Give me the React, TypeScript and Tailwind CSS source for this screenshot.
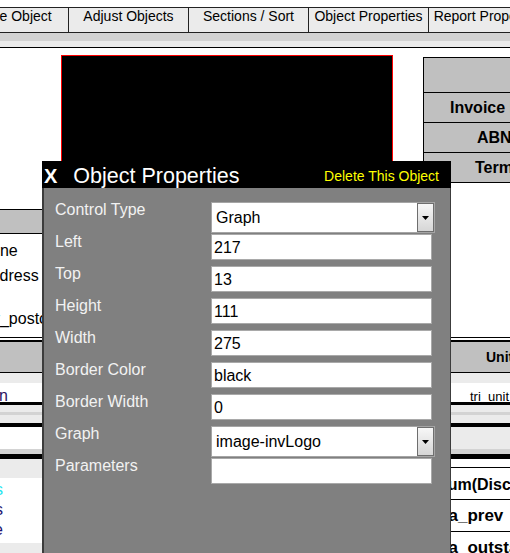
import React from "react";

const tabs = ["Create Object", "Adjust Objects", "Sections / Sort", "Object Properties", "Report Properties"];

type Row = { label: string; value: string; select?: boolean };
const rows: Row[] = [
  { label: "Control Type", value: "Graph", select: true },
  { label: "Left", value: "217" },
  { label: "Top", value: "13" },
  { label: "Height", value: "111" },
  { label: "Width", value: "275" },
  { label: "Border Color", value: "black" },
  { label: "Border Width", value: "0" },
  { label: "Graph", value: "image-invLogo", select: true },
  { label: "Parameters", value: "" },
];

function Frag({ text, color, w = 3 }: { text: string; color: string; w?: number }) {
  return (
    <div className="overflow-hidden flex justify-end whitespace-nowrap" style={{ width: w }}>
      <span className="shrink-0" style={{ color }}>{text}</span>
    </div>
  );
}

export default function App() {
  return (
    <div className="relative w-[510px] h-[553px] overflow-hidden bg-white text-black font-['Liberation_Sans',Arial,sans-serif]">
      <div className="flex flex-col h-full">
        <div className="h-[7px] shrink-0" />
        {/* tabs */}
        <div className="flex h-[26px] shrink-0 -ml-[51px] w-[700px] border-y border-[#222] bg-[#ebebeb]">
          {tabs.map((t) => (
            <div key={t} className="w-[120px] shrink-0 border-r border-[#222] text-center text-[14px] leading-[16px] whitespace-nowrap">
              {t}
            </div>
          ))}
        </div>
        <div className="h-[8px] shrink-0 bg-[#d3d3d3]" />
        <div className="h-[6px] shrink-0 bg-[#ebebeb]" />
        <div className="h-px shrink-0 bg-black" />
        {/* content */}
        <div className="flex items-start h-[161px] shrink-0">
          <div className="ml-[61px] mt-[7px] w-[332px] h-[150px] shrink-0 bg-black border border-[#ff0000]" />
          <div className="ml-[30px] mt-[9px] flex-1 border-l border-t border-black bg-[#c0c0c0] text-[16px] font-bold whitespace-nowrap overflow-hidden">
            <div className="h-[35px] border-b border-black" />
            <div className="h-[30px] border-b border-black flex items-center pl-[26px]">Invoice No:</div>
            <div className="h-[30px] border-b border-black flex items-center pl-[53px]">ABN:</div>
            <div className="h-[30px] border-b border-black flex items-center pl-[51px]">Terms:</div>
          </div>
        </div>
        {/* gray band */}
        <div className="h-[25px] w-[200px] shrink-0 border-y border-black bg-[#c0c0c0]" />
        {/* left labels */}
        <div className="h-[103px] shrink-0 flex flex-col text-[16px] leading-[18px] whitespace-nowrap">
          <div className="mt-[8px] -ml-[28.5px]">Phone</div>
          <div className="mt-[7px] -ml-[20px]">Address</div>
          <div className="mt-[25px] -ml-[20.5px]">inv_postcode</div>
        </div>
        <div className="h-px shrink-0 bg-black" />
        <div className="h-[2px] shrink-0" />
        <div className="h-[2px] shrink-0 bg-black" />
        <div className="h-[30px] shrink-0 bg-[#c0c0c0] flex items-center text-[16px]">
          <Frag text="Ml" color="#22d3ee" w={2} />
          <div className="ml-[486px] text-[14px] leading-[16px] font-bold whitespace-nowrap">Unit</div>
        </div>
        <div className="h-px shrink-0 bg-black" />
        <div className="h-[10px] shrink-0 bg-[#ebebeb]" />
        <div className="h-[19px] shrink-0 flex items-end text-[16px] leading-[12px]">
          <Frag text="on" color="#2a1060" w={8} />
          <div className="ml-[462px] text-[13px] leading-[10px] whitespace-nowrap">tri_unit</div>
        </div>
        <div className="h-[3px] shrink-0 bg-black" />
        <div className="h-[7px] shrink-0 bg-[#ebebeb]" />
        <div className="h-[3px] shrink-0 bg-[#d3d3d3]" />
        <div className="h-[8px] shrink-0 bg-[#ebebeb]" />
        <div className="h-[4px] shrink-0 bg-black" />
        <div className="h-[22px] shrink-0 flex">
          <div className="w-[240px] bg-white" />
          <div className="flex-1 bg-[#ebebeb]" />
        </div>
        <div className="h-[5px] shrink-0 bg-[#d3d3d3]" />
        <div className="h-[5px] shrink-0 bg-black" />
        <div className="flex-1 flex">
          <div className="w-[240px] flex flex-col">
            <div className="h-[19px] bg-[#ebebeb]" />
            <div className="h-[65px] bg-white flex flex-col pt-[2px] text-[16px] leading-[20px]">
              <Frag text="ms" color="#22e5f0" />
              <Frag text="es" color="#1c1470" />
              <Frag text="ze" color="#1c1470" />
            </div>
            <div className="flex-1 bg-[#ebebeb]" />
          </div>
          <div className="flex-1 flex flex-col font-bold whitespace-nowrap overflow-hidden">
            <div className="h-[8px]" />
            <div className="h-[32px] border-t border-black flex items-center pt-[2px] pl-[197px] text-[16px]">Sum(Discount)</div>
            <div className="h-[32px] border-t border-black flex items-center pl-[183px] text-[17px]">data_prev</div>
            <div className="h-[32px] border-t border-black flex items-center pl-[183px] text-[17px]">data_outstanding</div>
          </div>
        </div>
      </div>

      {/* dialog */}
      <div className="absolute left-[42px] top-[161px] w-[409px] h-[400px] flex flex-col">
        <div className="h-[27px] shrink-0 bg-black flex items-start pl-[2px] pr-[12px] text-white whitespace-nowrap overflow-hidden">
          <span className="text-[20px] leading-[31px] font-bold">X</span>
          <span className="ml-[16px] text-[21.5px] leading-[31px]">Object Properties</span>
          <span className="ml-auto text-[14px] leading-[31px] text-[#ffff00]">Delete This Object</span>
        </div>
        <div className="flex-1 bg-[#808080] border-l-2 border-r border-[#3c3c3c] pl-[11px] pt-[14px]">
          {rows.map((r) => (
            <div key={r.label} className="h-[32px] flex items-start">
              <div className="w-[156px] shrink-0 -mt-[1px] text-[16px] leading-[18px] text-[#f2f2f2]">{r.label}</div>
              {r.select ? (
                <div className="w-[224px] h-[31px] shrink-0 bg-white border border-[#a5a5a5] flex items-center text-[16px] leading-[18px]">
                  <span className="pl-[4px]">{r.value}</span>
                  <div className="ml-auto w-[17px] h-full border border-[#6e6e6e] bg-gradient-to-b from-[#f7f7f7] to-[#d6d6d6] flex items-center justify-center">
                    <svg width="7" height="4" viewBox="0 0 7 4">
                      <path d="M0 0H7L3.5 4Z" fill="#000" />
                    </svg>
                  </div>
                </div>
              ) : (
                <div className="w-[221px] h-[26px] shrink-0 bg-white border border-[#a9a9a9] flex items-center pl-[2px] pt-[1px] text-[16px] leading-[18px]">
                  {r.value}
                </div>
              )}
            </div>
          ))}
        </div>
      </div>
    </div>
  );
}
